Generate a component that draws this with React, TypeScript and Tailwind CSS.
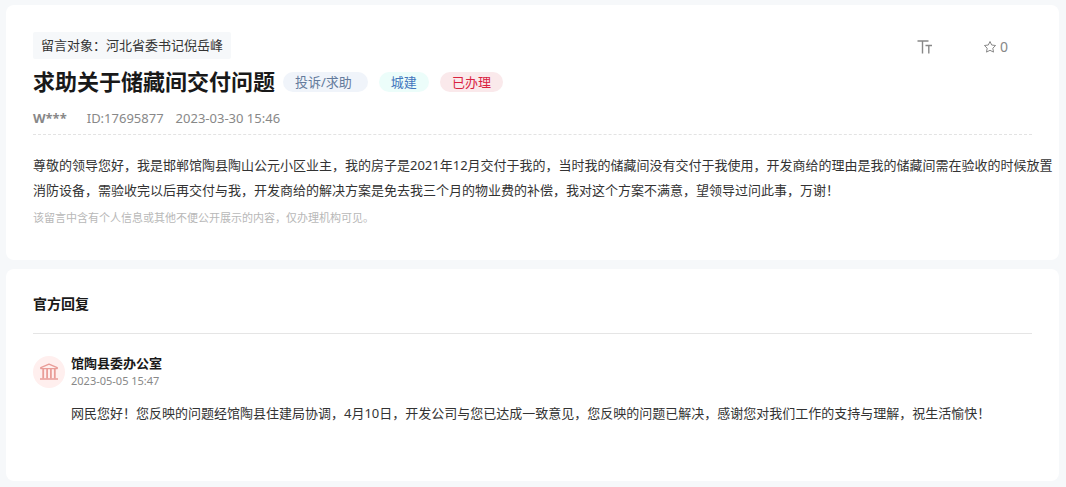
import React from "react";
import clsx from "clsx";

type Tag = {
  label: string;
  className: string;
};

const tags: Tag[] = [
  { label: "投诉/求助", className: "bg-[#f0f4fa] pr-4 text-[#647b9c]" },
  { label: "城建", className: "bg-[#ecfdfa] text-[#4377bd]" },
  { label: "已办理", className: "bg-[#fae9eb] text-[#d9233f]" },
];

const TextSizeIcon: React.FunctionComponent = () => (
  <svg
    width="16"
    height="16"
    viewBox="0 0 16 16"
    fill="none"
    stroke="currentColor"
    strokeWidth="1.4"
    aria-hidden="true"
  >
    <path d="M0.5 2h11M5.5 2v12.5" />
    <path d="M8.5 6.5h6.5M11.8 6.5v8" />
  </svg>
);

const StarIcon: React.FunctionComponent = () => (
  <svg
    width="14"
    height="14"
    viewBox="0 0 14 14"
    fill="none"
    stroke="currentColor"
    strokeLinejoin="round"
    aria-hidden="true"
  >
    <path d="M7 1.5l1.7 3.5 3.9.5-2.8 2.7.7 3.9L7 10.3l-3.5 1.8.7-3.9L1.4 5.5l3.9-.5z" />
  </svg>
);

const InstitutionIcon: React.FunctionComponent = () => (
  <svg
    width="20"
    height="18"
    viewBox="0 0 20 18"
    fill="none"
    stroke="currentColor"
    strokeLinejoin="round"
    aria-hidden="true"
  >
    <path d="M10 1.2L18.2 4.6v1H1.8v-1z" strokeWidth="1.4" />
    <path d="M4.2 6V15.5M8.1 6V15.5M11.9 6V15.5M15.8 6V15.5" strokeWidth="1.8" />
    <path d="M1 16h18" strokeWidth="1.5" />
  </svg>
);

const MessageCard: React.FunctionComponent = () => (
  <article className="rounded-lg bg-white pt-[27px] pb-[27px] pl-[27px]">
    <div className="mr-[27px]">
      <div className="flex items-start justify-between">
        <p className="rounded-xs bg-[#f6f8fa] px-2 text-[13px] leading-[27px] text-[#333]">
          留言对象：河北省委书记倪岳峰
        </p>
        <div className="mr-6 flex items-center gap-12 pt-1 text-[#888]">
          <button type="button" aria-label="字号" className="mr-0.5">
            <TextSizeIcon />
          </button>
          <button
            type="button"
            aria-label="收藏"
            className="flex items-center gap-[3px] text-[14px] leading-[22px]"
          >
            <StarIcon />
            <span>0</span>
          </button>
        </div>
      </div>
      <div className="flex h-11 items-center">
        <h1 className="mr-2 text-[22px] leading-8 font-bold text-[#191919]">
          求助关于储藏间交付问题
        </h1>
        <ul className="flex items-center gap-[11px] pt-0.5">
          {tags.map((tag) => (
            <li
              key={tag.label}
              className={clsx(
                "rounded-full px-3 text-[13px] leading-5",
                tag.className
              )}
            >
              {tag.label}
            </li>
          ))}
        </ul>
      </div>
      <div className="flex border-b border-dashed border-[#e3e3e3] pb-px text-[13px] leading-[30px] text-[#888]">
        <span className="mr-5 font-bold">W***</span>
        <span className="mr-3">ID:17695877</span>
        <time>2023-03-30 15:46</time>
      </div>
    </div>
    <p className="pt-[18px] text-[13px] leading-[25px] text-[#333]">
      尊敬的领导您好，我是邯郸馆陶县陶山公元小区业主，我的房子是2021年12月交付于我的，当时我的储藏间没有交付于我使用，开发商给的理由是我的储藏间需在验收的时候放置消防设备，需验收完以后再交付与我，开发商给的解决方案是免去我三个月的物业费的补偿，我对这个方案不满意，望领导过问此事，万谢！
    </p>
    <p className="text-[11px] leading-[30px] text-[#b8b8b8]">
      该留言中含有个人信息或其他不便公开展示的内容，仅办理机构可见。
    </p>
  </article>
);

const ReplyCard: React.FunctionComponent = () => (
  <section className="flex-1 rounded-lg bg-white px-[27px] pt-[22px] pb-13">
    <h2 className="border-b border-[#e5e5e5] pb-[17px] text-[14px] leading-[25px] font-bold text-[#191919]">
      官方回复
    </h2>
    <div className="flex gap-[6px] pt-5">
      <div className="mt-0.5 flex size-8 shrink-0 items-center justify-center rounded-full bg-[#ffefee] text-[#e99d98]">
        <InstitutionIcon />
      </div>
      <div>
        <h3 className="text-[13px] leading-[18px] font-bold text-[#191919]">
          馆陶县委办公室
        </h3>
        <time className="block text-[11px] leading-[18px] text-[#888]">
          2023-05-05 15:47
        </time>
        <p className="pt-[11px] text-[13px] leading-[25px] text-[#333]">
          网民您好！您反映的问题经馆陶县住建局协调，4月10日，开发公司与您已达成一致意见，您反映的问题已解决，感谢您对我们工作的支持与理解，祝生活愉快！
        </p>
      </div>
    </div>
  </section>
);

export default function App() {
  return (
    <main className="flex min-h-screen flex-col gap-[9px] bg-[#f6f8fa] pt-[5px] pr-[7px] pb-[6px] pl-[6px] font-['Noto_Sans','Noto_Sans_CJK_SC',sans-serif]">
      <MessageCard />
      <ReplyCard />
    </main>
  );
}
